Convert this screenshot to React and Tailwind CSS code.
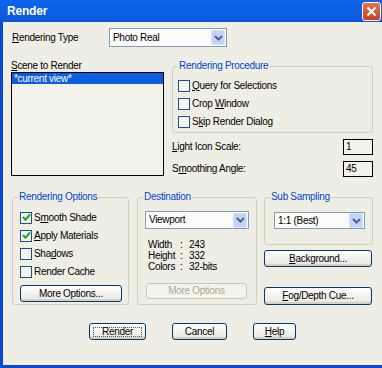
import React from "react";

function Chevron() {
    return (
        <svg width="9" height="6" viewBox="0 0 9 6">
            <path d="M1 1 L4.5 4.5 L8 1" stroke="#4d6185" strokeWidth="2" fill="none" />
        </svg>
    );
}

function Select({ text, className }) {
    return (
        <div className={`border border-[#7f9db9] bg-[#fbfbf8] flex items-center pl-[3px] pr-[1px] ${className}`}>
            <span className="flex-1 truncate">{text}</span>
            <span className="w-[14px] h-[15px] rounded-[2px] bg-[#c3d3fa] border border-[#d6e1fc] flex items-center justify-center">
                <Chevron />
            </span>
        </div>
    );
}

function Check({ checked, children }) {
    return (
        <div className="flex items-center h-[13px]">
            <span className="w-[12px] h-[12px] border border-[#1c5180] bg-[#f3f2ec] flex items-center justify-center shrink-0">
                {checked && (
                    <svg width="9" height="9" viewBox="0 0 9 9">
                        <path d="M1 4 L3.5 6.8 L8 1.5" stroke="#21a121" strokeWidth="2" fill="none" />
                    </svg>
                )}
            </span>
            <span className="ml-[2px]">{children}</span>
        </div>
    );
}

function Button({ children, className, disabled, focus }) {
    if (disabled) {
        return (
            <div className={`border border-[#c9c7ba] rounded-[3px] bg-[#f5f4ea] text-[#aca899] flex items-center justify-center ${className}`}>
                {children}
            </div>
        );
    }
    return (
        <div className={`border border-[#003c74] rounded-[3px] bg-gradient-to-b from-white to-[#e6e5dc] shadow-[inset_0_-2px_0_#d6d0c5] flex items-center justify-center ${className}`}>
            {focus ? (
                <span className="border border-dotted border-[#555] w-[calc(100%-6px)] h-[calc(100%-5px)] flex items-center justify-center">{children}</span>
            ) : (
                children
            )}
        </div>
    );
}

function Group({ title, className, children }) {
    return (
        <div className={`relative border border-[#d0d0bf] rounded-[3px] ${className}`}>
            <span className="absolute -top-[7px] left-[5px] px-[1px] bg-[#efeee5] text-[#0046d5] leading-[12px]">{title}</span>
            {children}
        </div>
    );
}

export default function App() {
    return (
        <div className="w-[382px] h-[368px] flex flex-col font-['Liberation_Sans',Arial,sans-serif] text-[10px] tracking-[-0.3px] text-black leading-[12px] select-none">
            <div className="h-[22px] bg-gradient-to-b from-[#0e66ea] to-[#0a58dc] flex items-center justify-between pl-[7px] pr-[1px]">
                <span className="text-white font-bold text-[12px] tracking-[-0.2px]">Render</span>
                <span className="w-[19px] h-[19px] rounded-[3px] border border-white bg-gradient-to-b from-[#e7734f] to-[#c7401f] flex items-center justify-center">
                    <svg width="11" height="11" viewBox="0 0 11 11">
                        <path d="M1.5 1.5 L9.5 9.5 M9.5 1.5 L1.5 9.5" stroke="white" strokeWidth="2.2" />
                    </svg>
                </span>
            </div>

            <div className="flex-1 border-l-[3px] border-b-[3px] border-[#0a48d4] bg-[#efeee5] flex flex-col">
                <div className="flex items-center mt-[6px]">
                    <span className="ml-[9px] w-[97px]"><u>R</u>endering Type</span>
                    <Select text="Photo Real" className="w-[118px] h-[19px]" />
                </div>

                <div className="flex mt-[13px]">
                    <div className="ml-[8px] w-[153px] flex flex-col">
                        <span className="h-[12px]"><u>S</u>cene to Render</span>
                        <div className="h-[104px] border border-black bg-[#f2f1ea]">
                            <div className="h-[11px] bg-[#0b5ee0] text-white pl-[2px] leading-[11px]">*current view*</div>
                        </div>
                    </div>

                    <div className="ml-[8px] w-[201px] flex flex-col">
                        <Group title="Rendering Procedure" className="mt-[6px] h-[67px] pt-[12px] pl-[5px] flex flex-col gap-[5px]">
                            <Check><u>Q</u>uery for Selections</Check>
                            <Check>Crop <u>W</u>indow</Check>
                            <Check>S<u>k</u>ip Render Dialog</Check>
                        </Group>
                        <div className="flex items-center justify-between mt-[6px] h-[16px]">
                            <span><u>L</u>ight Icon Scale:</span>
                            <span className="w-[30px] h-[16px] border border-black bg-[#f2f1ea] pl-[2px] leading-[14px]">1</span>
                        </div>
                        <div className="flex items-center justify-between mt-[6px] h-[16px]">
                            <span>S<u>m</u>oothing Angle:</span>
                            <span className="w-[30px] h-[16px] border border-black bg-[#f2f1ea] pl-[2px] leading-[14px]">45</span>
                        </div>
                    </div>
                </div>

                <div className="flex mt-[20px]">
                    <Group title="Rendering Options" className="ml-[9px] w-[117px] h-[108px] pt-[13px] pl-[7px] flex flex-col">
                        <div className="flex flex-col gap-[5px]">
                            <Check checked>S<u>m</u>ooth Shade</Check>
                            <Check checked><u>A</u>pply Materials</Check>
                            <Check>Sha<u>d</u>ows</Check>
                            <Check>Render Cache</Check>
                        </div>
                        <Button className="mt-[7px] w-[102px] h-[17px]">More Options...</Button>
                    </Group>

                    <Group title="Destination" className="ml-[8px] w-[120px] h-[108px] pt-[13px] pl-[7px] flex flex-col">
                        <Select text="Viewport" className="w-[104px] h-[18px]" />
                        <div className="mt-[10px] ml-[3px] flex flex-col leading-[11px]">
                            <div className="flex"><span className="w-[32px]">Width</span><span className="w-[9px]">:</span><span>243</span></div>
                            <div className="flex"><span className="w-[32px]">Height</span><span className="w-[9px]">:</span><span>332</span></div>
                            <div className="flex"><span className="w-[32px]">Colors</span><span className="w-[9px]">:</span><span>32-bits</span></div>
                        </div>
                        <Button disabled className="mt-[11px] ml-[1px] w-[101px] h-[16px]">More Options</Button>
                    </Group>

                    <div className="ml-[7px] w-[109px] flex flex-col">
                        <Group title="Sub Sampling" className="h-[48px] pt-[14px] pl-[9px]">
                            <Select text="1:1 (Best)" className="w-[91px] h-[17px]" />
                        </Group>
                        <Button className="mt-[5px] w-[108px] h-[17px]"><u>B</u>ackground...</Button>
                        <Button className="mt-[20px] w-[108px] h-[18px]"><u>F</u>og/Depth Cue...</Button>
                    </div>
                </div>

                <div className="flex mt-[18px]">
                    <Button focus className="ml-[86px] w-[57px] h-[17px]">Render</Button>
                    <Button className="ml-[26px] w-[55px] h-[17px]">Cancel</Button>
                    <Button className="ml-[26px] w-[43px] h-[17px]"><u>H</u>elp</Button>
                </div>
            </div>
        </div>
    );
}
